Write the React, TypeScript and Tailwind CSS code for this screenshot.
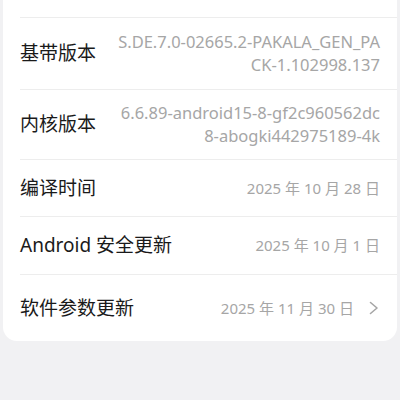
type Row = {
  label: string;
  value: string[];
  h: string;
  date?: boolean;
};

const rows: Row[] = [
  { label: "基带版本", value: ["S.DE.7.0-02665.2-PAKALA_GEN_PA", "CK-1.102998.137"], h: "h-[71px]" },
  { label: "内核版本", value: ["6.6.89-android15-8-gf2c960562dc", "8-abogki442975189-4k"], h: "h-[69px]" },
  { label: "编译时间", value: ["2025 年 10 月 28 日"], h: "h-[56px]", date: true },
  { label: "Android 安全更新", value: ["2025 年 10 月 1 日"], h: "h-[57px]", date: true },
];

const App = () => {
  return (
    <div
      className="w-[400px] h-[400px] overflow-hidden bg-[#f1f1f3]"
      style={{ fontFamily: '"Noto Sans", "Noto Sans CJK SC", sans-serif' }}
    >
      <div className="mx-[3px] mt-[-40px] bg-white rounded-[14px] overflow-hidden">
        {/* row cut off at top */}
        <div className="h-[57px] px-[17px] flex items-start justify-between pt-[13px]">
          <span className="text-[19px] leading-[30px] text-[#1a1a1a]">设备型号</span>
          <span className="text-[16px] leading-[30px] text-[#a6a6a6]">PLK110</span>
        </div>

        {rows.map((r) => (
          <div key={r.label} className="ml-[17px] border-t border-[#ededed]">
            <div className={`${r.h} pr-[17px] flex items-center justify-between`}>
              <span className="text-[19px] text-[#1a1a1a] whitespace-nowrap">{r.label}</span>
              <div
                className={`text-right ${r.date ? "text-[15px]" : "text-[16.5px]"} leading-[22.5px] text-[#a6a6a6] whitespace-nowrap`}
              >
                {r.value.map((v) => (
                  <div key={v}>{v}</div>
                ))}
              </div>
            </div>
          </div>
        ))}

        <div className="ml-[17px] border-t border-[#ededed]">
          <div className="h-[66px] pr-[18px] flex items-center justify-between">
            <span className="text-[19px] text-[#1a1a1a]">软件参数更新</span>
            <div className="flex items-center gap-[15px]">
              <span className="text-[15px] text-[#a6a6a6]">2025 年 11 月 30 日</span>
              <svg width="10" height="14" viewBox="0 0 10 14" fill="none">
                <polyline
                  points="1.5,1.5 8,7 1.5,12.5"
                  stroke="#a6a6a6"
                  strokeWidth="1.6"
                  strokeLinecap="round"
                  strokeLinejoin="round"
                />
              </svg>
            </div>
          </div>
        </div>
      </div>
    </div>
  );
};

export default App;
